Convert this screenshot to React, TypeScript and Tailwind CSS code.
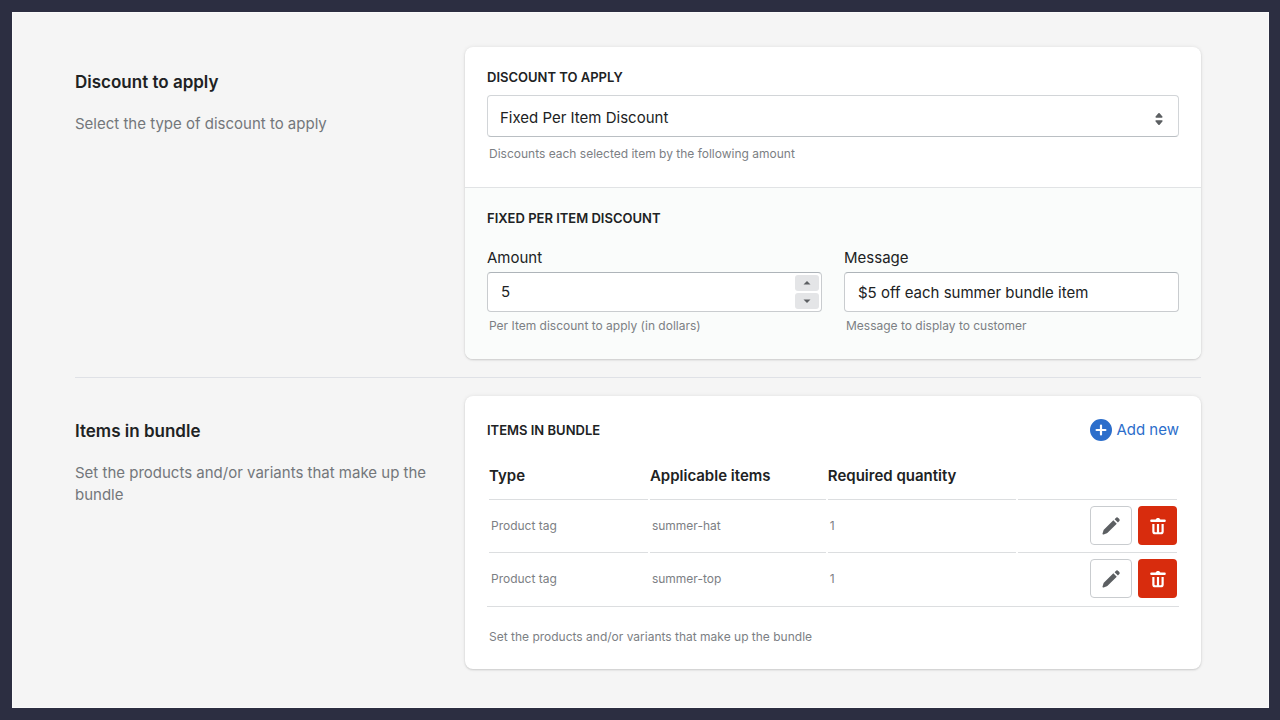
import { useState } from "react";
import type { ReactNode } from "react";

type BundleItem = {
  id: number;
  type: string;
  value: string;
  quantity: number;
};

const initialItems: BundleItem[] = [
  { id: 1, type: "Product tag", value: "summer-hat", quantity: 1 },
  { id: 2, type: "Product tag", value: "summer-top", quantity: 1 },
];

const icons = {
  edit: "M14 2.4l1.3-1.3a2 2 0 012.8 0l.9.9a2 2 0 010 2.8l-1.3 1.3zM12.6 3.6l3.8 3.8L6.2 17.6a2 2 0 01-.8.5l-3.6 1.3a1 1 0 01-1.2-1.2l1.2-3.7a2 2 0 01.5-.7z",
  trash:
    "M7.9 4.2c.2-.9 1-1.5 2.1-1.5s1.900.6 2.100 1.500H16a1.100 1.100 0 010 2.200H4a1.100 1.100 0 010-2.200zM4.800 8.200h2v6.800a.6.6 0 00.6.6H9V8.200h2v7.400h1.600a.6.6 0 00.6-.6V8.200h2v6.800a2.600 2.600 0 01-2.600 2.600H7.400A2.600 2.600 0 014.800 15z",
  plus: "M0 10a10 10 0 1020 0 10 10 0 00-20 0zm15 0a1 1 0 01-1 1h-3v3a1 1 0 11-2 0v-3H6a1 1 0 110-2h3V6a1 1 0 112 0v3h3a1 1 0 011 1z",
  select:
    "M7.676 9h4.648c.563 0 .879-.603.53-1.014l-2.323-2.746a.708.708 0 00-1.062 0L7.145 7.986c-.349.411-.033 1.014.531 1.014zm4.648 2H7.676c-.563 0-.878.603-.53 1.014l2.323 2.746c.27.32.792.32 1.062 0l2.323-2.746c.349-.411.033-1.014-.53-1.014z",
  caretUp: "M15 12l-5-5-5 5h10z",
  caretDown: "M5 8l5 5 5-5H5z",
};

function Icon({ path, className }: { path: string; className: string }) {
  return (
    <svg viewBox="0 0 20 20" fill="currentColor" aria-hidden="true" className={className}>
      <path d={path} />
    </svg>
  );
}

type SectionProps = {
  title: string;
  description: string;
  children: ReactNode;
};

function AnnotatedSection({ title, description, children }: SectionProps) {
  return (
    <section className="grid grid-cols-[minmax(0,390fr)_minmax(0,736fr)]">
      <div className="pt-[23px] pr-8">
        <h2 className="text-[17px] leading-6 font-semibold">{title}</h2>
        <p className="mt-[19px] text-[15px] leading-[22px] text-[#73777b]">{description}</p>
      </div>
      <div className="overflow-hidden rounded-lg bg-white shadow-[0_0_4px_rgba(23,24,24,0.08),0_1px_2px_rgba(0,0,0,0.14)]">
        {children}
      </div>
    </section>
  );
}

function HelpText({ id, children }: { id?: string; children: ReactNode }) {
  return (
    <p id={id} className="pl-0.5 text-xs leading-5 text-[#7c8084]">
      {children}
    </p>
  );
}

export default function App() {
  const [discount, setDiscount] = useState("fixed");
  const [amount, setAmount] = useState(5);
  const [message, setMessage] = useState("$5 off each summer bundle item");
  const [items, setItems] = useState<BundleItem[]>(initialItems);

  return (
    <div className="flex min-h-screen bg-[#2c2e41] p-3 pr-[11px] font-['Inter','Liberation_Sans',sans-serif] text-[#202223]">
      <main className="flex-1 border border-[#fafafa] bg-[#f5f5f5] pt-[34px] pr-[67px] pb-[37px] pl-[62px]">
        <AnnotatedSection title="Discount to apply" description="Select the type of discount to apply">
          <div className="px-[22px] pt-5 pb-[23px]">
            <label htmlFor="discount" className="block text-[13px] leading-5 font-semibold uppercase">
              Discount to apply
            </label>
            <div className="relative mt-2 mb-[7px]">
              <select
                id="discount"
                value={discount}
                onChange={(e) => setDiscount(e.target.value)}
                className="block h-[42px] w-full appearance-none rounded border border-[#d2d5d8] border-b-[#babfc3] bg-white px-3 pt-1 text-[15px]"
              >
                <option value="fixed">Fixed Per Item Discount</option>
                <option value="percentage">Percentage Discount</option>
              </select>
              <Icon path={icons.select} className="pointer-events-none absolute top-3 right-2 size-6 text-[#5c5f62]" />
            </div>
            <HelpText>Discounts each selected item by the following amount</HelpText>
          </div>

          <div className="border-t border-[#e1e3e5] bg-[#fafcfb] px-[22px] pt-5 pb-[23px]">
            <h3 className="text-[13px] leading-5 font-semibold uppercase">Fixed per item discount</h3>
            <div className="mt-5 grid grid-cols-2 gap-[22px]">
              <div className="flex flex-col gap-1">
                <label htmlFor="amount" className="text-[15px] leading-5">
                  Amount
                </label>
                <div className="flex h-10 rounded border border-[#c9cccf] border-t-[#aeb4b9] bg-white">
                  <input
                    id="amount"
                    type="number"
                    value={amount}
                    onChange={(e) => setAmount(Number(e.target.value))}
                    aria-describedby="amount-help"
                    className="min-w-0 flex-1 appearance-none bg-transparent px-[13px] text-[15px] [appearance:textfield] [&::-webkit-inner-spin-button]:appearance-none"
                  />
                  <div className="flex w-[26px] flex-col gap-0.5 py-0.5 pr-0.5">
                    <button
                      type="button"
                      aria-label="Increase amount"
                      onClick={() => setAmount(amount + 1)}
                      className="flex flex-1 items-center justify-center rounded-[3px] bg-[#e4e5e7] text-[#5c5f62]"
                    >
                      <Icon path={icons.caretUp} className="size-3.5" />
                    </button>
                    <button
                      type="button"
                      aria-label="Decrease amount"
                      onClick={() => setAmount(amount - 1)}
                      className="flex flex-1 items-center justify-center rounded-[3px] bg-[#e4e5e7] text-[#5c5f62]"
                    >
                      <Icon path={icons.caretDown} className="size-3.5" />
                    </button>
                  </div>
                </div>
                <HelpText id="amount-help">Per Item discount to apply (in dollars)</HelpText>
              </div>
              <div className="flex flex-col gap-1">
                <label htmlFor="message" className="text-[15px] leading-5">
                  Message
                </label>
                <input
                  id="message"
                  type="text"
                  value={message}
                  onChange={(e) => setMessage(e.target.value)}
                  aria-describedby="message-help"
                  className="h-10 w-full rounded border border-[#c9cccf] border-t-[#aeb4b9] bg-white px-[13px] text-[15px]"
                />
                <HelpText id="message-help">Message to display to customer</HelpText>
              </div>
            </div>
          </div>
        </AnnotatedSection>

        <hr className="my-[18px] border-[#dfe1e6]" />

        <AnnotatedSection
          title="Items in bundle"
          description="Set the products and/or variants that make up the bundle"
        >
          <div className="px-[22px] pt-[22px] pb-[22px]">
            <div className="flex h-6 items-center justify-between">
              <h3 className="text-[13px] leading-5 font-semibold uppercase">Items in bundle</h3>
              <button type="button" className="flex items-center gap-1 text-[15px] leading-5 text-[#2c6ecb]">
                <Icon path={icons.plus} className="size-[22px]" />
                Add new
              </button>
            </div>

            <table className="mt-4 mb-5 w-full table-fixed border-separate border-spacing-0.5 border-b border-[#dcdee0] text-left">
              <colgroup>
                <col className="w-[23.3%]" />
                <col className="w-[25.8%]" />
                <col className="w-[27.6%]" />
                <col />
              </colgroup>
              <thead>
                <tr className="h-10 text-[15px] leading-5 [&>th]:border-b [&>th]:border-[#dcdee0] [&>th]:pb-2 [&>th]:font-semibold">
                  <th>Type</th>
                  <th>Applicable items</th>
                  <th>Required quantity</th>
                  <th aria-label="Actions" />
                </tr>
              </thead>
              <tbody className="text-xs text-[#7c8084]">
                {items.map((item) => (
                  <tr
                    key={item.id}
                    className="[&>td]:border-b [&>td]:border-[#dcdee0] [&>td]:pt-1 [&>td]:pb-[7px] [&>td]:pl-0.5 last:[&>td]:border-0 last:[&>td]:pb-1.5"
                  >
                    <td>{item.type}</td>
                    <td>{item.value}</td>
                    <td>{item.quantity}</td>
                    <td>
                      <div className="flex justify-end gap-1.5">
                        <button
                          type="button"
                          aria-label={`Edit ${item.value}`}
                          className="flex h-[39px] w-[42px] items-center justify-center rounded border border-[#c9cccf] bg-white text-[#5c5f62]"
                        >
                          <Icon path={icons.edit} className="size-[18px]" />
                        </button>
                        <button
                          type="button"
                          aria-label={`Delete ${item.value}`}
                          onClick={() => setItems(items.filter((i) => i.id !== item.id))}
                          className="flex size-[39px] items-center justify-center rounded bg-[#d82c0d] text-white"
                        >
                          <Icon path={icons.trash} className="size-[22px]" />
                        </button>
                      </div>
                    </td>
                  </tr>
                ))}
              </tbody>
            </table>
            <HelpText>Set the products and/or variants that make up the bundle</HelpText>
          </div>
        </AnnotatedSection>
      </main>
    </div>
  );
}
